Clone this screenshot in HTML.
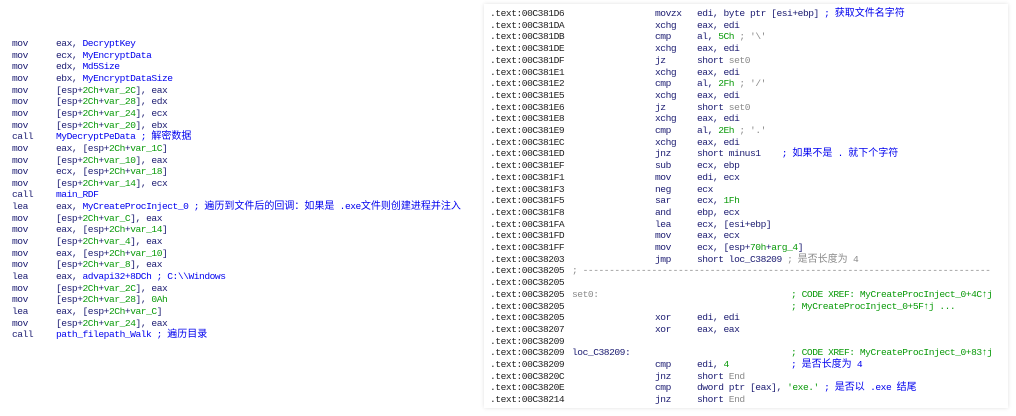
<!DOCTYPE html>
<html><head><meta charset="utf-8"><style>
body{margin:0;width:1016px;height:416px;background:#fff;overflow:hidden;position:relative;font-family:"Liberation Mono","Noto Sans CJK SC",monospace;font-size:9.6px;letter-spacing:-0.46px;}
.l{position:absolute;height:11.7px;line-height:11.7px;white-space:pre;}
.m{color:#1a1a70}.o{color:#1a1a70}.b{color:#0000ee}.g{color:#0a9a0a}.c{color:#8a8a8a}.a{color:#1a1a70}
.panel{position:absolute;left:484px;top:4px;width:524px;height:404px;background:#fff;box-shadow:0 0 4px rgba(0,0,0,0.12);}
.cj{font-family:"Noto Sans CJK SC",sans-serif;font-size:10px;letter-spacing:0;line-height:0;}
</style></head><body>
<div class="panel"></div>
<div id="L"></div>
<div id="R"></div>
<script>
function z(s){return '<span class="cj">'+s+'</span>';}
var L=[
['mov','eax, <span class="b">DecryptKey</span>'],
['mov','ecx, <span class="b">MyEncryptData</span>'],
['mov','edx, <span class="b">Md5Size</span>'],
['mov','ebx, <span class="b">MyEncryptDataSize</span>'],
['mov','[esp+<span class="g">2Ch</span>+<span class="g">var_2C</span>], eax'],
['mov','[esp+<span class="g">2Ch</span>+<span class="g">var_28</span>], edx'],
['mov','[esp+<span class="g">2Ch</span>+<span class="g">var_24</span>], ecx'],
['mov','[esp+<span class="g">2Ch</span>+<span class="g">var_20</span>], ebx'],
['call','<span class="b">MyDecryptPeData ; '+z('解密数据')+'</span>'],
['mov','eax, [esp+<span class="g">2Ch</span>+<span class="g">var_1C</span>]'],
['mov','[esp+<span class="g">2Ch</span>+<span class="g">var_10</span>], eax'],
['mov','ecx, [esp+<span class="g">2Ch</span>+<span class="g">var_18</span>]'],
['mov','[esp+<span class="g">2Ch</span>+<span class="g">var_14</span>], ecx'],
['call','<span class="b">main_RDF</span>'],
['lea','eax, <span class="b">MyCreateProcInject_0 ; '+z('遍历到文件后的回调：如果是')+' .exe'+z('文件则创建进程并注入')+'</span>'],
['mov','[esp+<span class="g">2Ch</span>+<span class="g">var_C</span>], eax'],
['mov','eax, [esp+<span class="g">2Ch</span>+<span class="g">var_14</span>]'],
['mov','[esp+<span class="g">2Ch</span>+<span class="g">var_4</span>], eax'],
['mov','eax, [esp+<span class="g">2Ch</span>+<span class="g">var_10</span>]'],
['mov','[esp+<span class="g">2Ch</span>+<span class="g">var_8</span>], eax'],
['lea','eax, <span class="b">advapi32+8DCh ; C:\\\\Windows</span>'],
['mov','[esp+<span class="g">2Ch</span>+<span class="g">var_2C</span>], eax'],
['mov','[esp+<span class="g">2Ch</span>+<span class="g">var_28</span>], <span class="g">0Ah</span>'],
['lea','eax, [esp+<span class="g">2Ch</span>+<span class="g">var_C</span>]'],
['mov','[esp+<span class="g">2Ch</span>+<span class="g">var_24</span>], eax'],
['call','<span class="b">path_filepath_Walk ; '+z('遍历目录')+'</span>']];
var h='';
L.forEach(function(r,i){var t=38+i*11.65;
h+='<div class="l m" style="left:12px;top:'+t+'px">'+r[0]+'</div><div class="l o" style="left:56px;top:'+t+'px">'+r[1]+'</div>';});
document.getElementById('L').innerHTML=h;
var R=[
['381D6','movzx','edi, byte ptr [esi+ebp] <span class="b">; '+z('获取文件名字符')+'</span>'],
['381DA','xchg','eax, edi'],
['381DB','cmp','al, <span class="g">5Ch</span> <span class="c">; \'\\\'</span>'],
['381DE','xchg','eax, edi'],
['381DF','jz','short <span class="c">set0</span>'],
['381E1','xchg','eax, edi'],
['381E2','cmp','al, <span class="g">2Fh</span> <span class="c">; \'/\'</span>'],
['381E5','xchg','eax, edi'],
['381E6','jz','short <span class="c">set0</span>'],
['381E8','xchg','eax, edi'],
['381E9','cmp','al, <span class="g">2Eh</span> <span class="c">; \'.\'</span>'],
['381EC','xchg','eax, edi'],
['381ED','jnz','short minus1    <span class="b">; '+z('如果不是')+' . '+z('就下个字符')+'</span>'],
['381EF','sub','ecx, ebp'],
['381F1','mov','edi, ecx'],
['381F3','neg','ecx'],
['381F5','sar','ecx, <span class="g">1Fh</span>'],
['381F8','and','ebp, ecx'],
['381FA','lea','ecx, [esi+ebp]'],
['381FD','mov','eax, ecx'],
['381FF','mov','ecx, [esp+<span class="g">70h</span>+<span class="g">arg_4</span>]'],
['38203','jmp','short loc_C38209 <span class="c">; '+z('是否长度为')+' 4</span>'],
['38205','#sep',''],
['38205','',''],
['38205','#lbl','<span class="c">set0:</span>','; CODE XREF: MyCreateProcInject_0+4C↑j'],
['38205','#lbl','','; MyCreateProcInject_0+5F↑j ...'],
['38205','xor','edi, edi'],
['38207','xor','eax, eax'],
['38209','',''],
['38209','#lbl','loc_C38209:','; CODE XREF: MyCreateProcInject_0+83↑j'],
['38209','cmp','edi, <span class="g">4</span>','<span class="b">; '+z('是否长度为')+' 4</span>',1],
['3820C','jnz','short <span class="c">End</span>'],
['3820E','cmp','dword ptr [eax], <span class="g">\'exe.\'</span> <span class="b">; '+z('是否以')+' .exe '+z('结尾')+'</span>'],
['38214','jnz','short <span class="c">End</span>']];
h='';
R.forEach(function(r,i){var t=8+i*11.7;
h+='<div class="l" style="left:490px;top:'+t+'px;color:#222">.text:00C'+r[0]+'</div>';
if(r[1]=='#sep'){h+='<div class="l c" style="left:572px;top:'+t+'px">; '+'-'.repeat(77)+'</div>';}
else if(r[1]=='#lbl'){h+='<div class="l a" style="left:572px;top:'+t+'px">'+r[2]+'</div><div class="l g" style="left:791px;top:'+t+'px">'+r[3]+'</div>';}
else{h+='<div class="l m" style="left:655px;top:'+t+'px">'+r[1]+'</div><div class="l o" style="left:697px;top:'+t+'px">'+r[2]+'</div>';
if(r[3])h+='<div class="l" style="left:791px;top:'+t+'px">'+r[3]+'</div>';}
});
document.getElementById('R').innerHTML=h;
</script>
</body></html>
